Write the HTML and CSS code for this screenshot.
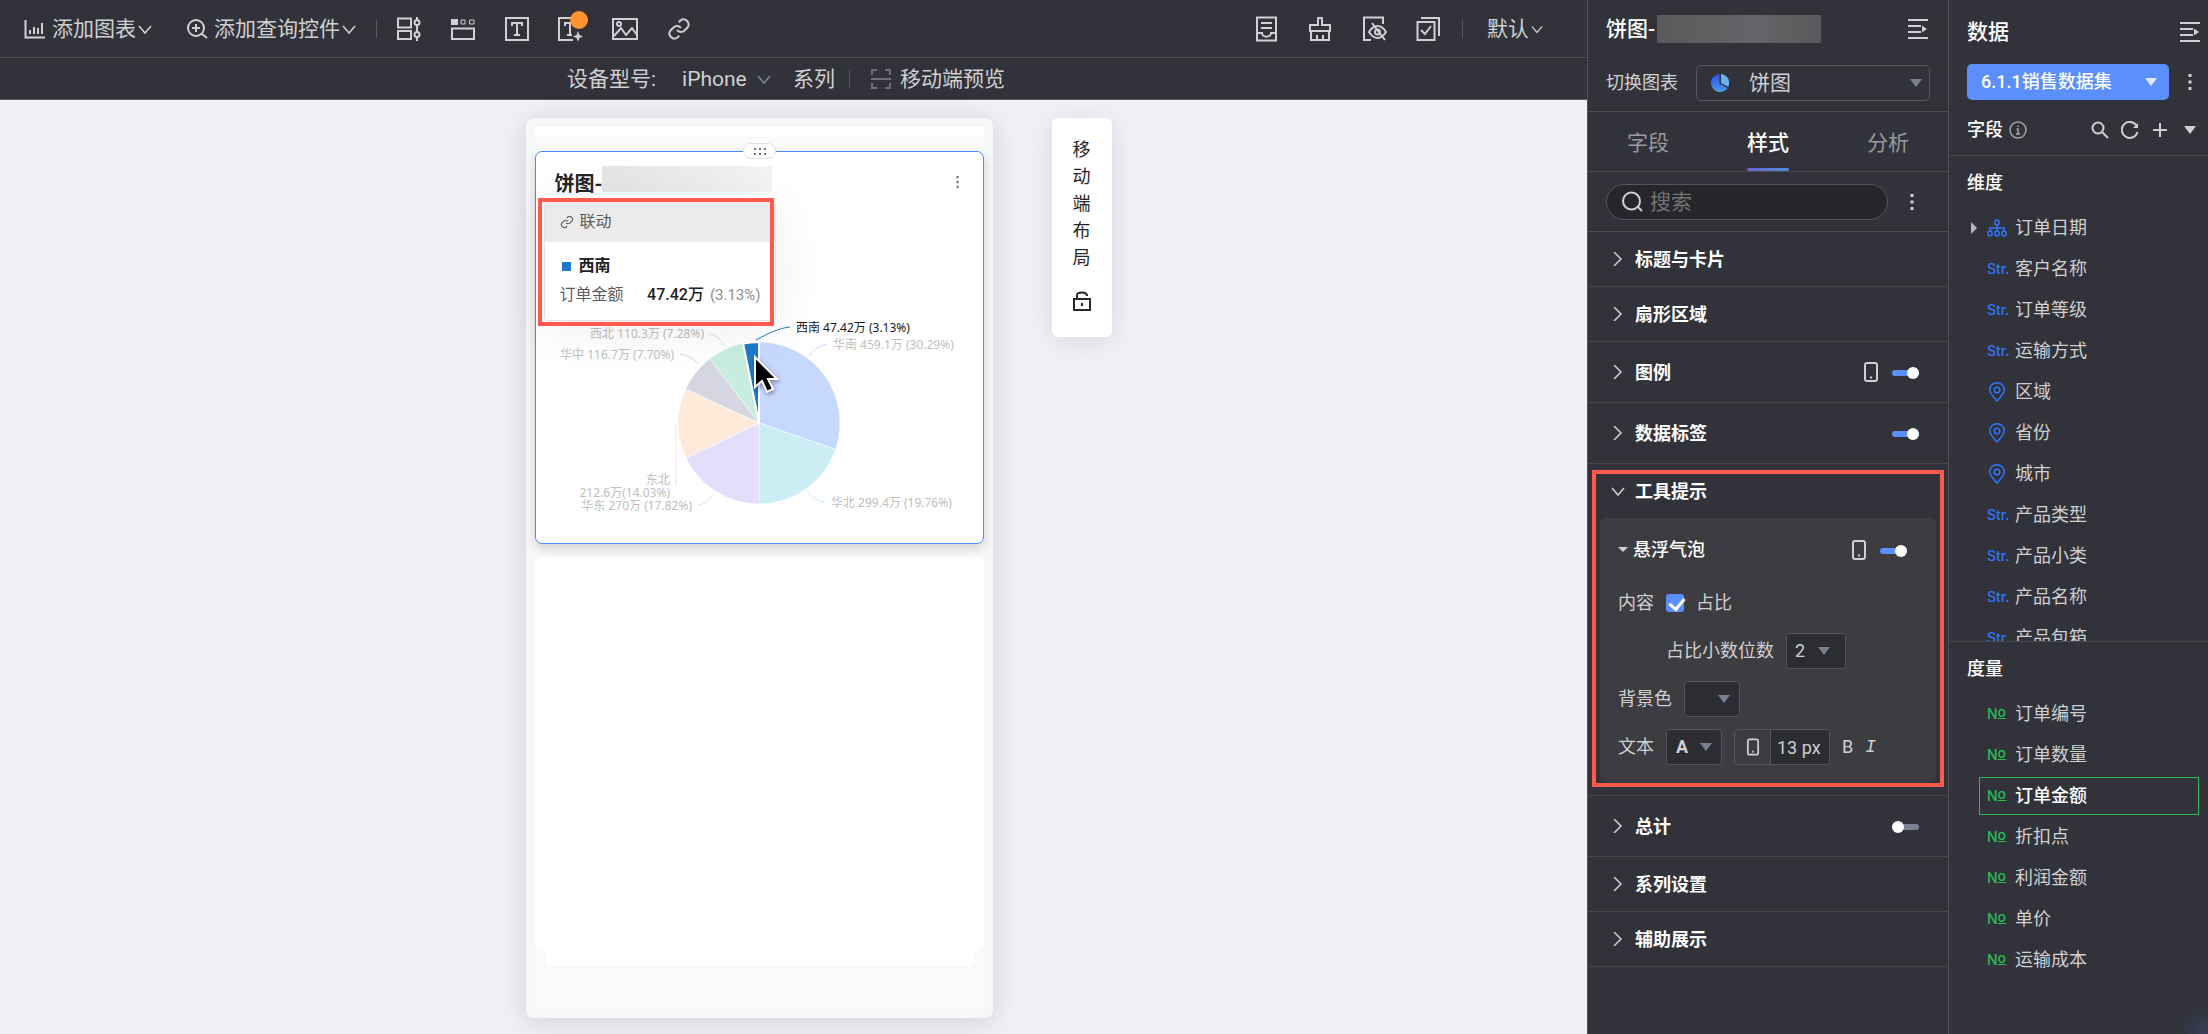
FILE: index.html
```html
<!DOCTYPE html>
<html lang="zh-CN">
<head>
  <meta charset="utf-8">
  <title>移动端布局</title>
  <link rel="stylesheet" href="styles.css">
</head>
<body>
  <!-- shared icons -->
  <svg class="sprite" aria-hidden="true">
    <symbol id="i-down" viewBox="0 0 14 14"><path d="M1 4l6 7 6-7"/></symbol>
    <symbol id="i-right" viewBox="0 0 14 14"><path d="M3 0l7 7-7 7"/></symbol>
    <symbol id="i-phone" viewBox="0 0 14 20"><rect x="1" y="1" width="12" height="18" rx="2"/><path d="M6 15.500h2"/></symbol>
    <symbol id="i-collapse" viewBox="0 0 20 20"><path d="M0 1h20M0 7h13M0 13h13M0 19h20"/><path class="solid" d="M14 6.500v7l5-3.500z"/></symbol>
    <symbol id="i-more" viewBox="0 0 4 18"><path class="solid" d="M.500 1h3v3h-3zM.500 7.500h3v3h-3zM.500 14h3v3h-3z"/></symbol>
    <symbol id="i-pin" viewBox="0 0 20 20"><path d="M10 19C5 13.500 2.700 11 2.700 8a7.300 7.300 0 0 1 14.600 0c0 3-2.300 5.500-7.300 11z"/><circle cx="10" cy="8" r="2.800"/></symbol>
    <symbol id="i-link" viewBox="0 0 24 24"><path d="M10 13a5 5 0 0 0 7.500.500l3-3a5 5 0 0 0-7-7l-1.700 1.700M14 11a5 5 0 0 0-7.500-.500l-3 3a5 5 0 0 0 7 7l1.700-1.700"/></symbol>
  </svg>

  <div class="app">
    <main class="workspace">
      <div class="toolbar">
        <button class="tool-btn"><svg class="icon" width="22" height="22" viewBox="0 0 22 22"><path d="M1.500 2v17.500H21M6 16v-4M10 16V9M14 16v-6M18 16V5"/></svg><span>添加图表</span><svg class="icon chevron" width="14" height="14"><use href="#i-down"/></svg></button>
        <button class="tool-btn tool-btn-query"><svg class="icon" width="22" height="22" viewBox="0 0 22 22"><circle cx="10" cy="10" r="8"/><path d="M6 10h8M10 6v8M16 16l5 4"/></svg><span>添加查询控件</span><svg class="icon chevron" width="14" height="14"><use href="#i-down"/></svg></button>
        <span class="divider"></span>
        <div class="tool-icons">
          <button class="icon-btn" aria-label="布局"><svg class="icon" width="24" height="24" viewBox="0 0 24 24"><path d="M1 1.500h13v9H1zM1 14h13v8H1zM20 0v3M20 8v7M20 20v4"/><circle cx="20" cy="5.500" r="2.500"/><circle cx="20" cy="17.500" r="2.500"/></svg></button>
          <button class="icon-btn" aria-label="标签页"><svg class="icon" width="24" height="24" viewBox="0 0 24 24"><path d="M1 11.500h22V22H1z"/><path class="thin" d="M10 3h4v4h-4zM18.500 3H23v4h-4.500z"/><path class="solid" d="M0 2h7v6H0z"/></svg></button>
          <button class="icon-btn" aria-label="文本"><svg class="icon" width="24" height="24" viewBox="0 0 24 24"><path d="M1 1h22v22H1zM7 9V6h10v3M12 6v12M9 18h6"/></svg></button>
          <button class="icon-btn badged" aria-label="智能文本"><svg class="icon" width="26" height="24" viewBox="0 0 26 24"><path d="M15 23H1V1h12M7 9V6h6M12 6v12M9 18h5"/><path class="solid" d="M20 14l1.500 4L25 19.500 21.500 21 20 24.500 18.500 21 15 19.500l3.500-1.500z"/></svg></button>
          <button class="icon-btn" aria-label="图片"><svg class="icon" width="26" height="24" viewBox="0 0 26 24"><path d="M1 2h24v20H1zM2 19l7-8 5 7 6-7 5 7"/><circle cx="7" cy="7" r="2"/></svg></button>
          <button class="icon-btn" aria-label="链接"><svg class="icon" width="24" height="24"><use href="#i-link"/></svg></button>
        </div>
        <div class="tool-icons tool-right">
          <button class="icon-btn" aria-label="收件箱"><svg class="icon" width="24" height="26" viewBox="0 0 24 26"><path d="M3 1.500h19v23H3zM7 7h11M7 12h11M3 17h5c0 5 9 5 9 0h5"/></svg></button>
          <button class="icon-btn" aria-label="清理"><svg class="icon" width="24" height="26" viewBox="0 0 24 26"><path d="M10 9V2h4v7h8v6H2V9zM3 15v9h18v-9M9 24v-5M15 24v-5"/></svg></button>
          <button class="icon-btn" aria-label="隐藏"><svg class="icon" width="25" height="26" viewBox="0 0 25 26"><path d="M21 8V1.500H2v22.500h7M7 16c5-8 12-8 17 0-5 8-12 8-17 0zM10 7l13 17"/><circle cx="15.500" cy="16" r="2.500"/></svg></button>
          <button class="icon-btn" aria-label="多选"><svg class="icon" width="25" height="26" viewBox="0 0 25 26"><path d="M1.500 6h17v18h-17zM5 2h18v18M5 14l4 4 6-8"/></svg></button>
        </div>
        <span class="divider"></span>
        <button class="tool-btn theme-btn"><span>默认</span><svg class="icon chevron" width="12" height="12"><use href="#i-down"/></svg></button>
      </div>

      <div class="device-bar">
        <label for="device">设备型号:</label>
        <span class="device-select">
          <select id="device"><option>iPhone</option></select>
          <svg class="icon" width="14" height="14"><use href="#i-down"/></svg>
        </span>
        <span>系列</span>
        <span class="divider"></span>
        <button class="tool-btn preview-btn"><svg class="icon muted" width="22" height="22" viewBox="0 0 22 22"><path d="M2 7V2h5M15 2h5v5M2 15v5h5M15 20h5v-5M1 11h20"/></svg><span>移动端预览</span></button>
      </div>

      <div class="canvas">
        <div class="phone">
          <div class="screen">
            <div class="strip-top"></div>
            <section class="chart-card">
              <div class="handle"><i></i><i></i><i></i><i></i><i></i><i></i></div>
              <header class="chart-head">
                <h2>饼图-</h2>
                <span class="masked"></span>
                <button class="icon-btn chart-more" aria-label="更多"><svg width="3" height="14"><use href="#i-more"/></svg></button>
              </header>
              <svg class="pie" viewBox="0 0 447 331" role="img" aria-label="饼图">
                <g transform="translate(223 211)">
                  <g class="slices">
                    <path fill="#c7d8ff" d="M0 0V-81A81 81 0 0 1 76.600 26.400z"/>
                    <path fill="#caeef4" d="M0 0L76.600 26.400A81 81 0 0 1 0 81z"/>
                    <path fill="#e2defb" d="M0 0V81A81 81 0 0 1-73 35.100z"/>
                    <path fill="#ffe9d9" d="M0 0L-73 35.100A81 81 0 0 1-73.500-34z"/>
                    <path fill="#d6d6e2" d="M0 0L-73.500-34A81 81 0 0 1-49.200-64.300z"/>
                    <path fill="#c7edde" d="M0 0L-49.200-64.300A81 81 0 0 1-15.800-79.400z"/>
                    <path class="active" fill="#1f78cb" d="M0 0L-15.800-79.400A81 81 0 0 1 0-81z"/>
                  </g>
                  <g class="leaders">
                    <path stroke="#1f78cb" d="M-3-83C8-89 20-95 31-96"/>
                    <path stroke="#c7d8ff" d="M50-67Q59-78 68-79"/>
                    <path stroke="#caeef4" d="M48 68Q58 79 66 79"/>
                    <path stroke="#e2defb" d="M-44 70Q-53 82-61 82"/>
                    <path stroke="#ffe0cc" d="M-83 1V63"/>
                    <path stroke="#d6d6e2" d="M-60-59Q-70-68-79-69"/>
                    <path stroke="#c7edde" d="M-35-77Q-40-88-50-89"/>
                  </g>
                  <g class="labels">
                    <text class="active" x="37" y="-91">西南 47.42万 (3.13%)</text>
                    <text x="74" y="-74">华南 459.1万 (30.29%)</text>
                    <text x="72" y="84">华北 299.4万 (19.76%)</text>
                    <text class="end" x="-67" y="87">华东 270万 (17.82%)</text>
                    <text class="end" x="-89" y="61">东北</text>
                    <text class="end" x="-89" y="74">212.6万(14.03%)</text>
                    <text class="end" x="-85" y="-64">华中 116.7万 (7.70%)</text>
                    <text class="end" x="-55" y="-85">西北 110.3万 (7.28%)</text>
                  </g>
                  <path class="cursor" d="M-4-66V-36l7-6 5 11 6-3-5-10h9z"/>
                </g>
              </svg>

              <div class="tooltip">
                <button class="tooltip-link"><svg class="icon" width="14" height="14"><use href="#i-link"/></svg>联动</button>
                <div class="tooltip-body">
                  <div class="tooltip-name"><i></i>西南</div>
                  <div class="tooltip-row"><span>订单金额</span><strong>47.42万</strong><small>(3.13%)</small></div>
                </div>
              </div>
              <div class="mark mark-tooltip"></div>
            </section>
            <div class="placeholder"></div>
            <div class="placeholder-tail"></div>
          </div>
        </div>
        <button class="layout-tab">
          <span>移动端布局</span>
          <svg width="20" height="22" viewBox="0 0 20 22"><path d="M2 9h16v11H2zM5 9V5c0-3 10-4 10 1"/><path d="M10 13v3"/></svg>
        </button>
      </div>
    </main>

    <aside class="settings">
      <header class="settings-head">
        <h2>饼图-</h2>
        <span class="masked masked-dark"></span>
        <button class="icon-btn" aria-label="收起"><svg class="icon" width="20" height="20"><use href="#i-collapse"/></svg></button>
      </header>
      <div class="switch-chart">
        <label for="chartType">切换图表</label>
        <span class="select chart-type">
          <svg width="18" height="18" viewBox="0 0 18 18"><defs><linearGradient id="pieFill" x2="0" y2="1"><stop stop-color="#2b50e8"/><stop offset="1" stop-color="#4b9be8"/></linearGradient></defs><path fill="url(#pieFill)" d="M8.500 0v9.500l8 4.500A9 9 0 1 1 8.500 0z"/><path fill="#6cb0f0" d="M10 0a9 9 0 0 1 7.300 12.800L10 9z"/></svg>
          <select id="chartType"><option>饼图</option></select>
        </span>
      </div>
      <nav class="tabs">
        <button>字段</button>
        <button class="active">样式</button>
        <button>分析</button>
      </nav>
      <div class="search-row">
        <label class="search">
          <svg class="icon" width="22" height="22" viewBox="0 0 22 22"><circle cx="10.500" cy="10" r="8.500"/><path d="M17 16l4 4"/></svg>
          <input type="text" placeholder="搜索" aria-label="搜索">
        </label>
        <button class="icon-btn" aria-label="更多"><svg class="more-icon" width="4" height="18"><use href="#i-more"/></svg></button>
      </div>

      <div class="section"><svg class="icon arrow" width="14" height="14"><use href="#i-right"/></svg><h3>标题与卡片</h3></div>
      <div class="section"><svg class="icon arrow" width="14" height="14"><use href="#i-right"/></svg><h3>扇形区域</h3></div>
      <div class="section section-tall"><svg class="icon arrow" width="14" height="14"><use href="#i-right"/></svg><h3>图例</h3><svg class="icon phone-icon" width="14" height="20"><use href="#i-phone"/></svg><input class="toggle" type="checkbox" aria-label="图例" checked></div>
      <div class="section section-tall"><svg class="icon arrow" width="14" height="14"><use href="#i-right"/></svg><h3>数据标签</h3><input class="toggle" type="checkbox" aria-label="数据标签" checked></div>

      <div class="section-open">
        <div class="section section-title"><svg class="icon arrow" width="14" height="14"><use href="#i-down"/></svg><h3>工具提示</h3></div>
        <div class="group">
          <div class="group-head"><i class="caret"></i><h4>悬浮气泡</h4><svg class="icon phone-icon" width="14" height="20"><use href="#i-phone"/></svg><input class="toggle" type="checkbox" aria-label="悬浮气泡" checked></div>
          <div class="field">
            <span>内容</span>
            <input class="checkbox" type="checkbox" id="ratio" checked>
            <label for="ratio">占比</label>
          </div>
          <div class="field field-indent">
            <label for="decimals">占比小数位数</label>
            <span class="select boxed decimals"><select id="decimals"><option>2</option></select></span>
          </div>
          <div class="field">
            <label for="bgColor">背景色</label>
            <span class="select boxed"><select id="bgColor"><option label=" "></option></select></span>
          </div>
          <div class="field">
            <label for="textColor">文本</label>
            <span class="select boxed text-color"><select id="textColor"><option>A</option></select></span>
            <span class="font-size"><svg class="icon" width="12" height="18"><use href="#i-phone"/></svg><input type="text" value="13 px" aria-label="字号"></span>
            <button class="format">B</button>
            <button class="format italic">I</button>
          </div>
        </div>
        <div class="mark mark-section"></div>
      </div>

      <div class="section section-tall"><svg class="icon arrow" width="14" height="14"><use href="#i-right"/></svg><h3>总计</h3><input class="toggle" type="checkbox" aria-label="总计"></div>
      <div class="section"><svg class="icon arrow" width="14" height="14"><use href="#i-right"/></svg><h3>系列设置</h3></div>
      <div class="section"><svg class="icon arrow" width="14" height="14"><use href="#i-right"/></svg><h3>辅助展示</h3></div>
    </aside>

    <aside class="data">
      <header class="data-head">
        <h2>数据</h2>
        <button class="icon-btn" aria-label="收起"><svg class="icon" width="20" height="20"><use href="#i-collapse"/></svg></button>
      </header>
      <div class="dataset">
        <span class="select dataset-select"><select aria-label="数据集"><option>6.1.1销售数据集</option></select></span>
        <button class="icon-btn" aria-label="更多"><svg class="more-icon" width="4" height="18"><use href="#i-more"/></svg></button>
      </div>
      <div class="fields-head">
        <h3>字段</h3>
        <svg class="icon info" width="18" height="18" viewBox="0 0 18 18"><circle cx="9" cy="9" r="8"/><path d="M7.500 8H9v5M9 4.500v1.500M7 13h4"/></svg>
        <div class="field-actions">
          <button class="icon-btn" aria-label="搜索"><svg class="icon" width="18" height="18" viewBox="0 0 18 18"><circle cx="7" cy="7" r="5.500"/><path d="M11 11l6 6"/></svg></button>
          <button class="icon-btn" aria-label="刷新"><svg class="icon" width="18" height="18" viewBox="0 0 18 18"><path d="M16.500 11a8 8 0 1 1-1-6.500"/><path class="solid" d="M17 2v5h-5z"/></svg></button>
          <button class="icon-btn" aria-label="添加"><svg class="icon" width="18" height="18" viewBox="0 0 18 18"><path d="M9 2v14M2 9h14"/></svg></button>
          <button class="icon-btn" aria-label="展开"><svg width="12" height="8" viewBox="0 0 12 8"><path fill="#d0d0d0" d="M0 0h12L6 8z"/></svg></button>
        </div>
      </div>

      <section class="dimensions">
        <h3>维度</h3>
        <ul class="field-list">
          <li class="expandable"><span class="type"><svg class="icon" width="20" height="18" viewBox="0 0 20 18"><rect x="8" y="1" width="4" height="5" rx="2"/><rect x="1" y="12" width="4" height="5" rx="2"/><rect x="8" y="12" width="4" height="5" rx="2"/><rect x="15" y="12" width="4" height="5" rx="2"/><path d="M10 6v6M3 12V9h14v3"/></svg></span>订单日期</li>
          <li><span class="type">Str.</span>客户名称</li>
          <li><span class="type">Str.</span>订单等级</li>
          <li><span class="type">Str.</span>运输方式</li>
          <li><span class="type"><svg class="icon" width="20" height="20"><use href="#i-pin"/></svg></span>区域</li>
          <li><span class="type"><svg class="icon" width="20" height="20"><use href="#i-pin"/></svg></span>省份</li>
          <li><span class="type"><svg class="icon" width="20" height="20"><use href="#i-pin"/></svg></span>城市</li>
          <li><span class="type">Str.</span>产品类型</li>
          <li><span class="type">Str.</span>产品小类</li>
          <li><span class="type">Str.</span>产品名称</li>
          <li><span class="type">Str.</span>产品包箱</li>
        </ul>
      </section>

      <section class="measures">
        <h3>度量</h3>
        <ul class="field-list">
          <li><span class="type number">N<u>o</u></span>订单编号</li>
          <li><span class="type number">N<u>o</u></span>订单数量</li>
          <li class="selected"><span class="type number">N<u>o</u></span>订单金额</li>
          <li><span class="type number">N<u>o</u></span>折扣点</li>
          <li><span class="type number">N<u>o</u></span>利润金额</li>
          <li><span class="type number">N<u>o</u></span>单价</li>
          <li><span class="type number">N<u>o</u></span>运输成本</li>
        </ul>
      </section>
    </aside>
  </div>
</body>
</html>
```

FILE: styles.css
```css
/* Reset and base styles */
* {
  margin: 0;
  padding: 0;
  box-sizing: border-box;
}

body {
  height: 100vh;
  overflow: hidden;
  font-family: Roboto, "Noto Sans CJK SC", sans-serif;
  font-size: 18px;
  line-height: 24px;
  color: #d0d0d1;
  background-color: #32323a;
}

button,
select,
input {
  font: inherit;
  color: inherit;
  background: none;
  border: none;
  outline: none;
  appearance: none;
}

button,
select {
  cursor: pointer;
}

ul {
  list-style: none;
}

h2,
h3,
h4 {
  font-size: 18px;
  font-weight: 500;
  color: #ffffff;
}

h2 {
  font-size: 21px;
}

svg {
  display: block;
  flex: none;
}

.sprite {
  position: absolute;
  width: 0;
  height: 0;
}

.icon {
  fill: none;
  stroke: currentColor;
  stroke-width: 2;
}

.icon .thin {
  stroke-width: 1;
}

.solid {
  fill: currentColor;
  stroke: none;
}

.icon-btn {
  display: flex;
  align-items: center;
  justify-content: center;
}

.divider {
  width: 1px;
  height: 18px;
  background-color: #56565c;
}

.app {
  display: flex;
  height: 100%;
}

/* Red outline drawn over a highlighted area */
.mark {
  position: absolute;
  border: 4px solid #fb5a4c;
  pointer-events: none;
}

/* Toolbar */
.workspace {
  flex: 1;
  min-width: 0;
  display: flex;
  flex-direction: column;
}

.toolbar {
  display: flex;
  align-items: center;
  height: 58px;
  padding: 0 44px 0 24px;
  border-bottom: 1px solid #505055;
  font-size: 21px;
}

.tool-btn {
  display: flex;
  align-items: center;
  gap: 6px;
  white-space: nowrap;
}

.tool-btn .chevron {
  margin-left: -4px;
  stroke-width: 1.5;
}

.tool-btn-query {
  margin: 0 20px 0 34px;
}

.tool-icons {
  display: flex;
  align-items: center;
  gap: 30px;
  margin-left: 20px;
}

.tool-icons .icon-btn {
  width: 24px;
}

.badged {
  position: relative;
}

.badged::after {
  content: "";
  position: absolute;
  top: -6px;
  left: 11px;
  width: 18px;
  height: 18px;
  border-radius: 50%;
  background-color: #ff9430;
}

.tool-right {
  margin: 0 22px 0 auto;
}

.theme-btn {
  margin-left: 24px;
}

.device-bar {
  display: flex;
  align-items: center;
  justify-content: center;
  height: 42px;
  padding-right: 15px;
  border-bottom: 1px solid #5a5557;
  font-size: 21px;
}

.device-select {
  display: flex;
  align-items: center;
  gap: 10px;
  margin: 0 22px 0 26px;
}

.device-select .icon {
  color: #7c8596;
  stroke-width: 1.5;
}

.device-bar .divider {
  margin: 0 20px 0 14px;
}

.preview-btn {
  gap: 8px;
}

.muted {
  color: #707078;
}

/* Canvas */
.canvas {
  flex: 1;
  display: flex;
  justify-content: center;
  align-items: flex-start;
  gap: 59px;
  padding: 18px 0 16px 50px;
  background-color: #f0f1f6;
}

.phone {
  width: 467px;
  height: 100%;
  padding: 9px;
  border-radius: 8px;
  background-color: #f6f7f9;
  box-shadow: 0 4px 28px rgba(0, 0, 0, 0.14);
}

.screen {
  height: 100%;
  background-color: #fafafa;
}

.strip-top {
  height: 9px;
  margin-bottom: 15px;
  border-radius: 0 0 6px 6px;
  background-color: #ffffff;
}

.chart-card {
  position: relative;
  height: 393px;
  margin-bottom: 14px;
  border: 1px solid #4a8af4;
  border-radius: 7px;
  background-color: #ffffff;
  box-shadow: 0 5px 12px rgba(0, 0, 0, 0.16);
}

.handle {
  position: absolute;
  top: -9px;
  left: 50%;
  display: grid;
  grid-template-columns: repeat(3, 2px);
  gap: 3px;
  place-content: center;
  width: 33px;
  height: 16px;
  margin-left: -16px;
  border: 1px solid #e2e2e4;
  border-radius: 8px;
  background-color: #ffffff;
}

.handle i {
  height: 2px;
  background-color: #77777a;
}

.chart-head {
  display: flex;
  align-items: center;
  height: 60px;
  padding: 0 24px 0 19px;
}

.chart-head h2 {
  padding-top: 3px;
  font-size: 20px;
  font-weight: 700;
  color: #242426;
}

.chart-more {
  margin-left: auto;
  color: #77777a;
}

.masked {
  width: 170px;
  height: 26px;
  margin-bottom: 6px;
  background: linear-gradient(90deg, #e3e4e5, #f3f3f3);
}

.masked-dark {
  width: 164px;
  height: 28px;
  margin: 0 0 0 2px;
  background: linear-gradient(90deg, #5a5a5c, #646568 60%, #59595b);
}

.pie {
  width: 100%;
}

.slices path {
  stroke: #ffffff;
  stroke-width: 1;
  stroke-opacity: 0.5;
}

.slices .active {
  stroke-width: 2;
  stroke-opacity: 1;
}

.leaders {
  fill: none;
  stroke-width: 1;
}

.labels {
  font-family: "Noto Sans", "Noto Sans CJK SC", sans-serif;
  font-size: 12px;
  fill: #bebebe;
}

.labels .active {
  fill: #1a1a1a;
}

.labels .end {
  text-anchor: end;
}

.cursor {
  fill: #000000;
  stroke: #ffffff;
  stroke-width: 2;
  filter: drop-shadow(1px 2px 2px rgba(0, 0, 0, 0.4));
}

.tooltip {
  position: absolute;
  top: 48px;
  left: 8px;
  width: 232px;
  border: 1px solid #e3e3e3;
  border-radius: 4px;
  background-color: #ffffff;
  box-shadow: 0 8px 50px rgba(0, 0, 0, 0.08);
  font-size: 16px;
  color: #5c5c5e;
  overflow: hidden;
}

.tooltip-link {
  display: flex;
  align-items: center;
  gap: 6px;
  width: 100%;
  height: 41px;
  padding-left: 15px;
  background-color: #ebebeb;
}

.tooltip-body {
  padding: 10px 14px 11px 15px;
}

.tooltip-name {
  display: flex;
  align-items: center;
  height: 28px;
  font-weight: 700;
  color: #222222;
}

.tooltip-name i {
  width: 9px;
  height: 9px;
  margin: 0 8px 0 2px;
  background-color: #1f78cb;
}

.tooltip-row {
  display: flex;
  align-items: center;
  height: 29px;
}

.tooltip-row strong {
  margin-left: auto;
  font-weight: 500;
  color: #222222;
}

.tooltip-row small {
  margin-left: 6px;
  font-size: 15px;
  color: #8c8c8c;
}

.mark-tooltip {
  top: 46px;
  left: 2px;
  width: 236px;
  height: 128px;
}

.placeholder {
  height: 393px;
  border-radius: 7px;
  background-color: #ffffff;
}

.placeholder-tail {
  height: 15px;
  margin: 0 11px;
  background-color: #ffffff;
}

.layout-tab {
  display: flex;
  flex-direction: column;
  align-items: center;
  gap: 19px;
  width: 60px;
  padding: 18px 20px 25px;
  border-radius: 6px;
  background-color: #ffffff;
  box-shadow: 0 4px 28px rgba(0, 0, 0, 0.1);
  font-size: 18px;
  line-height: 27px;
  color: #26262a;
}

.layout-tab span {
  width: 18px;
  overflow-wrap: anywhere;
}

.layout-tab svg {
  fill: none;
  stroke: #26262a;
  stroke-width: 2;
}

/* Selects */
.select {
  position: relative;
  display: flex;
  align-items: center;
  height: 36px;
}

.select select {
  flex: 1;
  height: 100%;
  min-width: 0;
}

.select::after {
  content: "";
  position: absolute;
  right: 7px;
  border: 6px solid transparent;
  border-top: 8px solid #7c8091;
  border-bottom: 0;
  pointer-events: none;
}

.boxed {
  width: 56px;
  padding-left: 9px;
  border: 1px solid #56565b;
  border-radius: 4px;
  background-color: #2c2d31;
}

.boxed::after {
  right: 9px;
}

/* Settings panel */
.settings {
  width: 362px;
  border: 1px solid #505055;
  border-width: 0 1px;
}

.settings-head {
  display: flex;
  align-items: center;
  height: 58px;
  padding: 0 20px 0 18px;
}

.settings-head .icon-btn {
  margin-left: auto;
}

.switch-chart {
  display: flex;
  align-items: center;
  justify-content: space-between;
  height: 54px;
  padding: 0 18px 4px;
  border-bottom: 1px solid #4a4a4e;
}

.chart-type {
  width: 234px;
  padding-left: 14px;
  border: 1px solid #56565b;
  border-radius: 5px;
  font-size: 21px;
}

.chart-type select {
  padding-left: 20px;
}

.tabs {
  display: flex;
  height: 60px;
  border-bottom: 1px solid #4a4a4e;
  font-size: 21px;
  color: #9a9a9c;
}

.tabs button {
  position: relative;
  flex: 1;
  padding-top: 2px;
}

.tabs .active {
  font-weight: 500;
  color: #ffffff;
}

.tabs .active::after {
  content: "";
  position: absolute;
  bottom: 0;
  left: 50%;
  width: 42px;
  height: 3px;
  margin-left: -21px;
  border-radius: 2px;
  background: linear-gradient(90deg, #6a62d2, #4b90d8);
}

.search-row {
  display: flex;
  align-items: center;
  height: 60px;
  padding: 0 34px 0 18px;
  border-bottom: 1px solid #4a4a4e;
}

.search-row .icon-btn {
  margin-left: auto;
}

.search {
  display: flex;
  align-items: center;
  gap: 7px;
  width: 282px;
  height: 36px;
  padding: 0 14px;
  border: 1px solid #56565b;
  border-radius: 18px;
  background-color: #26262b;
}

.search input {
  flex: 1;
  min-width: 0;
  font-size: 21px;
}

.search input::placeholder {
  color: #747477;
}

.section {
  display: flex;
  align-items: center;
  height: 55px;
  padding: 0 29px 0 23px;
  border-bottom: 1px solid #47474b;
}

.section h3 {
  margin: 0 auto 0 10px;
  padding-top: 2px;
  font-weight: 700;
}

.section .arrow {
  stroke-width: 1.5;
}

.section-tall {
  height: 61px;
}

.phone-icon {
  margin-right: 14px;
}

.toggle {
  width: 27px;
  height: 6px;
  margin-top: 2px;
  border-radius: 3px;
  background-color: #7c8091;
}

.toggle::before {
  content: "";
  display: block;
  width: 12px;
  height: 12px;
  margin-top: -3px;
  border-radius: 50%;
  background-color: #ffffff;
}

.toggle:checked {
  background-color: #5b8ffb;
}

.toggle:checked::before {
  margin-left: 15px;
}

.section-open {
  position: relative;
  padding-bottom: 12px;
  border-bottom: 1px solid #47474b;
}

.section-title {
  height: 54px;
  border-bottom: none;
}

.mark-section {
  top: 6px;
  left: 4px;
  right: 4px;
  bottom: 8px;
}

.group {
  margin: 0 12px;
  padding: 2px 29px 12px 18px;
  border-radius: 6px;
  background-color: #3c3c41;
}

.group-head {
  display: flex;
  align-items: center;
  height: 59px;
}

.caret {
  border: 5px solid transparent;
  border-top-color: #d0d0d1;
  border-bottom: 0;
}

.group-head h4 {
  margin: 0 auto 0 5px;
}

.field {
  display: flex;
  align-items: center;
  gap: 12px;
  height: 48px;
}

.field-indent {
  padding-left: 48px;
}

.checkbox {
  width: 18px;
  height: 18px;
  border-radius: 3px;
  background-color: #5b8ffb;
}

.checkbox:checked::before {
  content: "";
  display: block;
  width: 7px;
  height: 12px;
  margin: 1px 0 0 6px;
  border: solid #ffffff;
  border-width: 0 3px 3px 0;
  transform: rotate(40deg);
}

.decimals {
  width: 60px;
  padding-left: 8px;
}

.decimals::after {
  right: 15px;
}

.text-color {
  font-weight: 700;
}

.font-size {
  display: flex;
  align-items: center;
  width: 96px;
  height: 36px;
  border: 1px solid #56565b;
  border-radius: 4px;
}

.font-size .icon {
  margin: 0 11px 0 12px;
}

.font-size input {
  flex: 1;
  min-width: 0;
  height: 100%;
  padding-left: 6px;
  border-left: 1px solid #56565b;
  border-radius: 0 4px 4px 0;
  background-color: #2c2d31;
}

.italic {
  font-family: "Liberation Mono", monospace;
  font-style: italic;
}

/* Data panel */
.data {
  width: 259px;
  display: flex;
  flex-direction: column;
  background: radial-gradient(circle at 100% 100%, #34405a, #32323a 30px);
}

.data-head {
  display: flex;
  align-items: center;
  justify-content: space-between;
  height: 64px;
  padding: 0 8px 0 18px;
}

.dataset {
  display: flex;
  align-items: center;
  justify-content: space-between;
  padding: 0 16px 0 18px;
}

.dataset-select {
  width: 202px;
  padding-left: 14px;
  border-radius: 5px;
  background-color: #5b8ffb;
  font-weight: 500;
  color: #ffffff;
}

.dataset-select::after {
  right: 12px;
  border-top-color: #dfe9ff;
}

.fields-head {
  display: flex;
  align-items: center;
  height: 56px;
  padding: 4px 12px 0 18px;
  border-bottom: 1px solid #4a4a4e;
}

.fields-head .info {
  margin-left: 6px;
  color: #a4a4a6;
  stroke-width: 1.5;
}

.field-actions {
  display: flex;
  gap: 12px;
  margin-left: auto;
}

.field-actions .icon-btn:last-child {
  margin-left: 3px;
}

.dimensions {
  flex: 0 0 47%;
  overflow: hidden;
  border-bottom: 1px solid #4a4a4e;
}

.dimensions h3,
.measures h3 {
  padding: 15px 0 14px 18px;
}

.field-list {
  display: flex;
  flex-direction: column;
  gap: 3px;
  padding: 0 9px 0 30px;
}

.field-list li {
  position: relative;
  display: flex;
  align-items: center;
  flex: none;
  height: 38px;
  padding-left: 7px;
  border: 1px solid transparent;
}

.field-list .selected {
  border-color: #29bd57;
  color: #ffffff;
  font-weight: 500;
}

.expandable::before {
  content: "";
  position: absolute;
  left: -9px;
  border: 6px solid transparent;
  border-left-color: #b8b8ba;
  border-right: 0;
}

.type {
  width: 28px;
  font-family: Inter, sans-serif;
  font-size: 14px;
  font-weight: 500;
  color: #2f76ff;
}

.type .icon {
  stroke-width: 1.5;
}

.number {
  color: #29bd57;
}

.number u {
  vertical-align: 2px;
  line-height: 1;
}
```
